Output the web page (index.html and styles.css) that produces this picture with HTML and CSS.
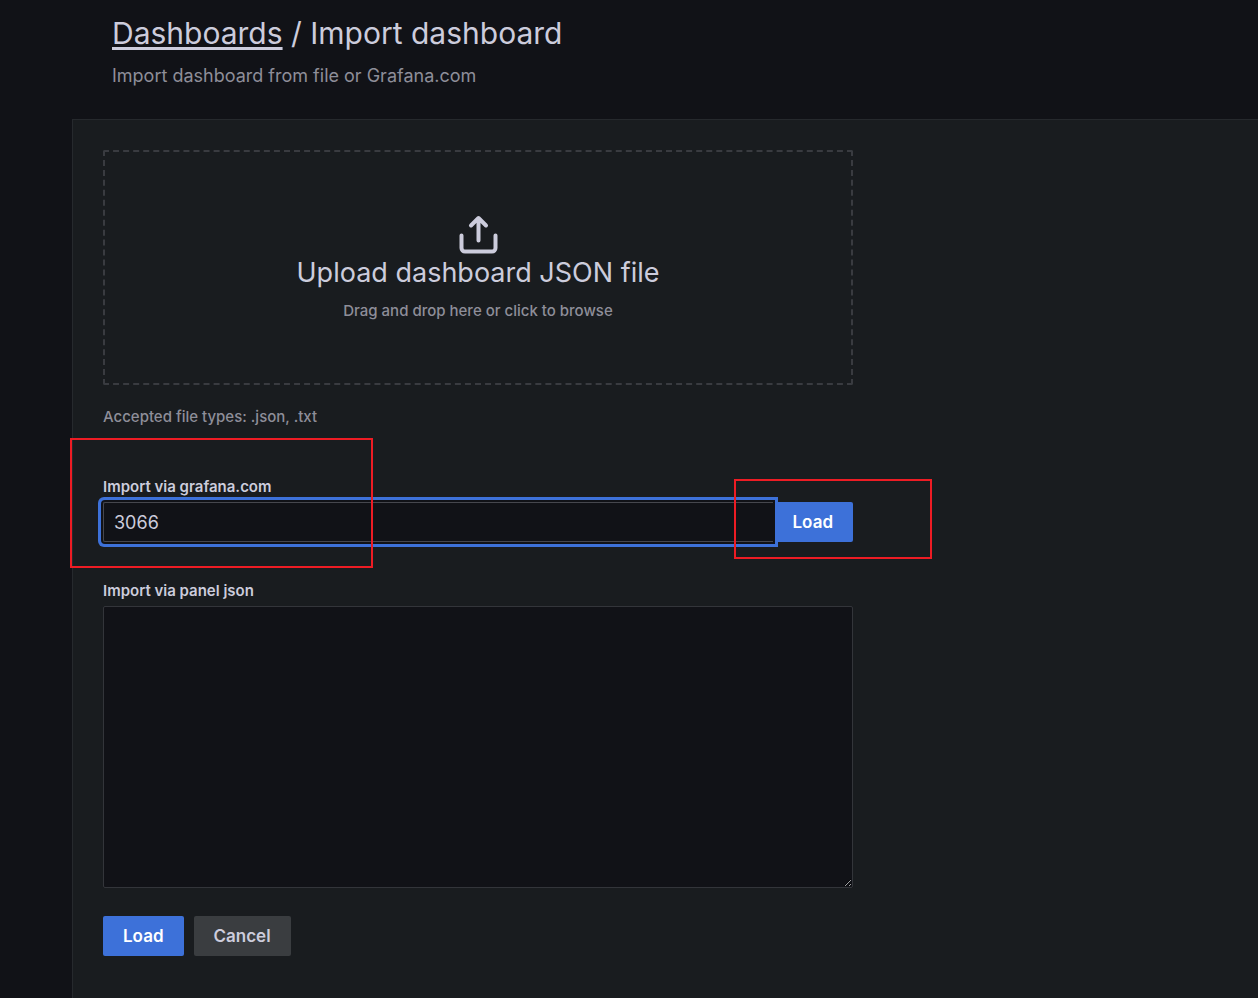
FILE: index.html
```html
<!DOCTYPE html>
<html lang="en">
<head>
<meta charset="utf-8">
<title>Import dashboard</title>
<link rel="stylesheet" href="styles.css">
</head>
<body>
<div class="page">
  <header class="page-header">
    <h1 class="page-title"><a class="crumb" href="#">Dashboards</a> / Import dashboard</h1>
    <p class="page-subtitle">Import dashboard from file or Grafana.com</p>
  </header>
  <main class="panel">
    <form class="form">
      <button type="button" class="dropzone">
        <svg class="upload-icon" viewBox="0 0 40 40" aria-hidden="true">
          <path d="M3.500 20.500V33a3.500 3.500 0 0 0 3.500 3.500h27A3.500 3.500 0 0 0 37.500 33V20.500M20.500 25.500V4M13 10.500 20.500 3l7.500 7.500"/>
        </svg>
        <span class="dropzone-title">Upload dashboard JSON file</span>
        <span class="dropzone-hint">Drag and drop here or click to browse</span>
      </button>
      <p class="accepted">Accepted file types: .json, .txt</p>
      <div class="field field-id">
        <label class="label" for="dashboard-id">Import via grafana.com</label>
        <div class="input-row">
          <input class="text-input" id="dashboard-id" type="text" value="3066">
          <button type="button" class="btn btn-primary btn-attached">Load</button>
        </div>
        <span class="marker marker-input"></span>
        <span class="marker marker-load"></span>
      </div>
      <div class="field field-json">
        <label class="label" for="panel-json">Import via panel json</label>
        <textarea class="text-area" id="panel-json"></textarea>
      </div>
      <div class="actions">
        <button type="button" class="btn btn-primary">Load</button>
        <button type="button" class="btn btn-secondary">Cancel</button>
      </div>
    </form>
  </main>
</div>
</body>
</html>
```

FILE: styles.css
```css
* {
  box-sizing: border-box;
}

body {
  margin: 0;
  background: #111217;
  color: #ccccdc;
  font-family: Inter, "Liberation Sans", sans-serif;
  font-size: 18px;
}

button,
input,
textarea {
  font: inherit;
  color: inherit;
}

.page {
  display: flex;
  flex-direction: column;
  min-height: 100vh;
  padding-left: 72px;
}

.page-header {
  padding: 13px 40px 31px;
}

.page-title {
  margin: 0 0 11px;
  font-size: 30px;
  font-weight: 400;
  line-height: 40px;
}

.crumb {
  color: inherit;
  text-decoration: underline;
  text-decoration-thickness: 3px;
  text-underline-offset: 3px;
  text-decoration-skip-ink: none;
}

.page-subtitle {
  margin: 0;
  color: #8e8e99;
  line-height: 24px;
}

.panel {
  flex: 1;
  padding: 30px;
  background: #191c1f;
  border: solid #26292d;
  border-width: 1px 0 0 1px;
}

.form {
  display: flex;
  flex-direction: column;
  max-width: 750px;
}

.dropzone {
  display: flex;
  flex-direction: column;
  align-items: center;
  padding: 63px 20px 62px;
  background: none;
  border: 2px dashed #393b40;
  border-radius: 2px;
  cursor: pointer;
}

.upload-icon {
  width: 40px;
  height: 40px;
  fill: none;
  stroke: #ccccdc;
  stroke-width: 4;
  stroke-linecap: round;
  stroke-linejoin: round;
}

.dropzone-title {
  font-size: 27px;
  line-height: 36px;
}

.dropzone-hint {
  margin-top: 10px;
  color: #8e8e99;
  font-size: 15px;
  font-weight: 500;
  line-height: 20px;
}

.accepted {
  margin: 22px 0 50px;
  color: #8e8e99;
  font-size: 15px;
  font-weight: 500;
  line-height: 20px;
}

.field {
  display: flex;
  flex-direction: column;
  position: relative;
}

.label {
  margin-bottom: 5px;
  font-size: 15px;
  font-weight: 600;
  line-height: 20px;
}

.input-row {
  display: flex;
}

.text-input {
  flex: 1;
  min-width: 0;
  height: 40px;
  padding: 0 10px;
  position: relative;
  z-index: 1;
  background: #111217;
  border: 1px solid #46474e;
  border-right-width: 0;
  border-radius: 2px 0 0 2px;
  outline: none;
  box-shadow: 0 0 0 2px #111217, 0 0 0 5px #3d71d9;
}

.btn {
  height: 40px;
  padding: 0 20px;
  border: 0;
  border-radius: 2px;
  font-size: 17px;
  font-weight: 600;
  cursor: pointer;
}

.btn-primary {
  background: #3d71d9;
  color: #ffffff;
}

.btn-secondary {
  background: #3a3d40;
}

.btn-attached {
  border-radius: 0 2px 2px 0;
}

.field-json {
  margin-top: 39px;
}

.text-area {
  height: 282px;
  padding: 8px 11px;
  background: #111217;
  border: 1px solid #33353a;
  border-radius: 2px;
  outline: none;
  resize: vertical;
}

.actions {
  display: flex;
  gap: 10px;
  margin-top: 28px;
}

.marker {
  position: absolute;
  z-index: 2;
  border: 2px solid #ed1c24;
  pointer-events: none;
}

.marker-input {
  top: -39px;
  left: -33px;
  width: 303px;
  height: 130px;
}

.marker-load {
  top: 2px;
  right: -79px;
  width: 198px;
  height: 80px;
}
```
